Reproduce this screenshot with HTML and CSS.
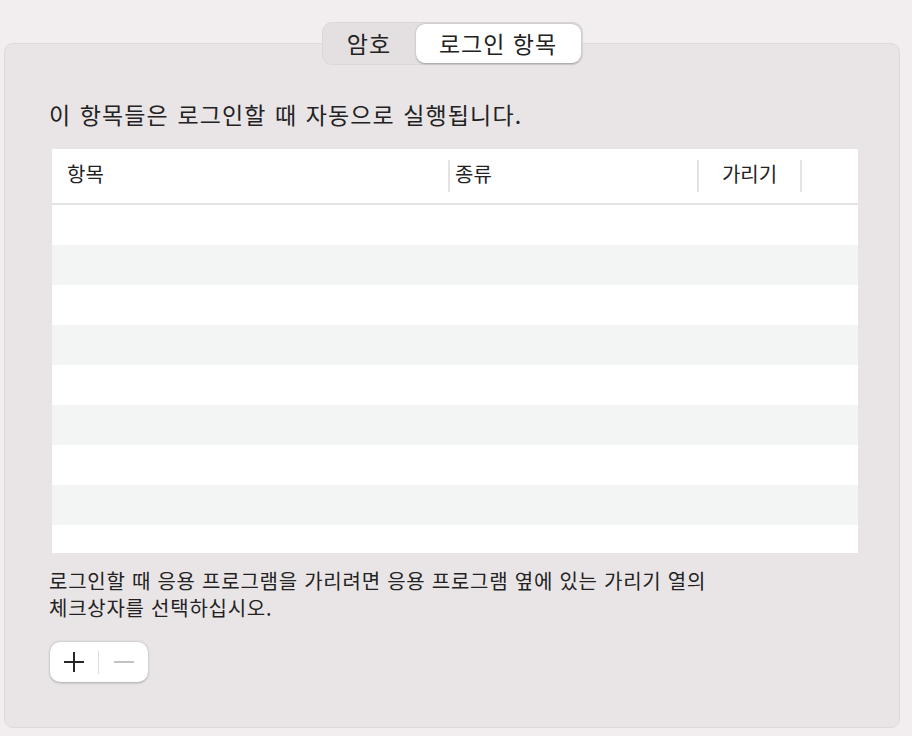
FILE: index.html
```html
<!DOCTYPE html>
<html lang="ko">
<head>
<meta charset="utf-8">
<link rel="stylesheet" href="styles.css">
</head>
<body>
<div class="page">
  <div class="tabs">
    <div class="tab">암호</div>
    <div class="tab selected">로그인 항목</div>
  </div>
  <div class="panel">
    <h1 class="heading">이 항목들은 로그인할 때 자동으로 실행됩니다.</h1>
    <div class="table">
      <div class="thead">
        <div class="th col-item">항목</div>
        <div class="th col-kind">종류</div>
        <div class="th col-hide">가리기</div>
        <div class="th col-rest"></div>
      </div>
      <div class="rows">
        <div class="row"></div>
        <div class="row alt"></div>
        <div class="row"></div>
        <div class="row alt"></div>
        <div class="row"></div>
        <div class="row alt"></div>
        <div class="row"></div>
        <div class="row alt"></div>
        <div class="row last"></div>
      </div>
    </div>
    <p class="hint">로그인할 때 응용 프로그램을 가리려면 응용 프로그램 옆에 있는 가리기 열의<br>체크상자를 선택하십시오.</p>
    <div class="buttons">
      <span class="btn plus"><svg width="22" height="22" viewBox="0 0 22 22"><path d="M11 1V21M1 11H21" stroke="#262626" stroke-width="2"/></svg></span>
      <span class="sep"></span>
      <span class="btn minus"><svg width="22" height="22" viewBox="0 0 22 22"><path d="M1 11H21" stroke="#b5b3b4" stroke-width="1.6"/></svg></span>
    </div>
  </div>
</div>
</body>
</html>
```

FILE: styles.css
```css
html, body {
  margin: 0;
  padding: 0;
  background: #f2edee;
  width: 912px;
  height: 736px;
  overflow: hidden;
  font-family: "Noto Sans CJK KR", "Noto Sans", sans-serif;
  color: #222222;
}
.page {
  padding: 22px 12px 0 4px;
  display: flex;
  flex-direction: column;
  align-items: stretch;
}
.tabs {
  position: relative;
  z-index: 2;
  align-self: center;
  display: flex;
  width: 261px;
  height: 43px;
  box-sizing: border-box;
  background: #e4dfe0;
  border: 1px solid #dbd6d7;
  border-radius: 10px;
  padding: 1px 1px 1px 0;
}
.tab {
  display: flex;
  align-items: center;
  justify-content: center;
  font-size: 23px;
  line-height: 1;
  letter-spacing: 1px;
  padding-bottom: 1px;
}
.tab:first-child {
  width: 93px;
}
.tab.selected {
  flex: 1;
  background: #ffffff;
  border-radius: 9px;
  box-shadow: 0 0.5px 2px rgba(0,0,0,0.3);
}
.panel {
  margin-top: -22px;
  height: 685px;
  box-sizing: border-box;
  background: #e9e5e6;
  border: 1px solid #dedadb;
  border-radius: 9px;
  padding: 47px 41px 0 47px;
}
.heading {
  margin: 0 0 0 -3px;
  font-size: 23px;
  font-weight: 400;
  line-height: 46px;
  letter-spacing: 1.1px;
  word-spacing: 1px;
}
.table {
  margin-top: 12px;
  height: 404px;
  background: #ffffff;
  overflow: hidden;
}
.thead {
  height: 54px;
  border-bottom: 2px solid #e4e4e4;
  display: flex;
  align-items: center;
}
.th {
  height: 32px;
  display: flex;
  align-items: center;
  font-size: 20px;
  box-sizing: border-box;
  padding-bottom: 5px;
}
.col-item {
  width: 398px;
  padding-left: 15px;
  border-right: 2px solid #e3e3e3;
}
.col-kind {
  width: 249px;
  padding-left: 5px;
  border-right: 2px solid #e3e3e3;
}
.col-hide {
  width: 103px;
  justify-content: center;
  border-right: 2px solid #e3e3e3;
}
.col-rest {
  flex: 1;
}
.row {
  height: 40px;
  background: #ffffff;
}
.row.alt {
  background: #f3f4f4;
}
.hint {
  margin: 14px 0 0 -3px;
  font-size: 20px;
  line-height: 27px;
  letter-spacing: 0.75px;
}
.buttons {
  margin-top: 21px;
  margin-left: -2px;
  width: 98px;
  height: 40px;
  box-sizing: border-box;
  background: #ffffff;
  border-radius: 10px;
  box-shadow: 0 0.5px 2.5px rgba(0,0,0,0.28);
  display: flex;
  align-items: center;
}
.btn {
  display: flex;
  align-items: center;
  justify-content: center;
  height: 40px;
}
.btn.plus {
  width: 48px;
}
.sep {
  width: 1px;
  height: 23px;
  background: #dcdcdc;
}
.btn.minus {
  width: 49px;
}
```
